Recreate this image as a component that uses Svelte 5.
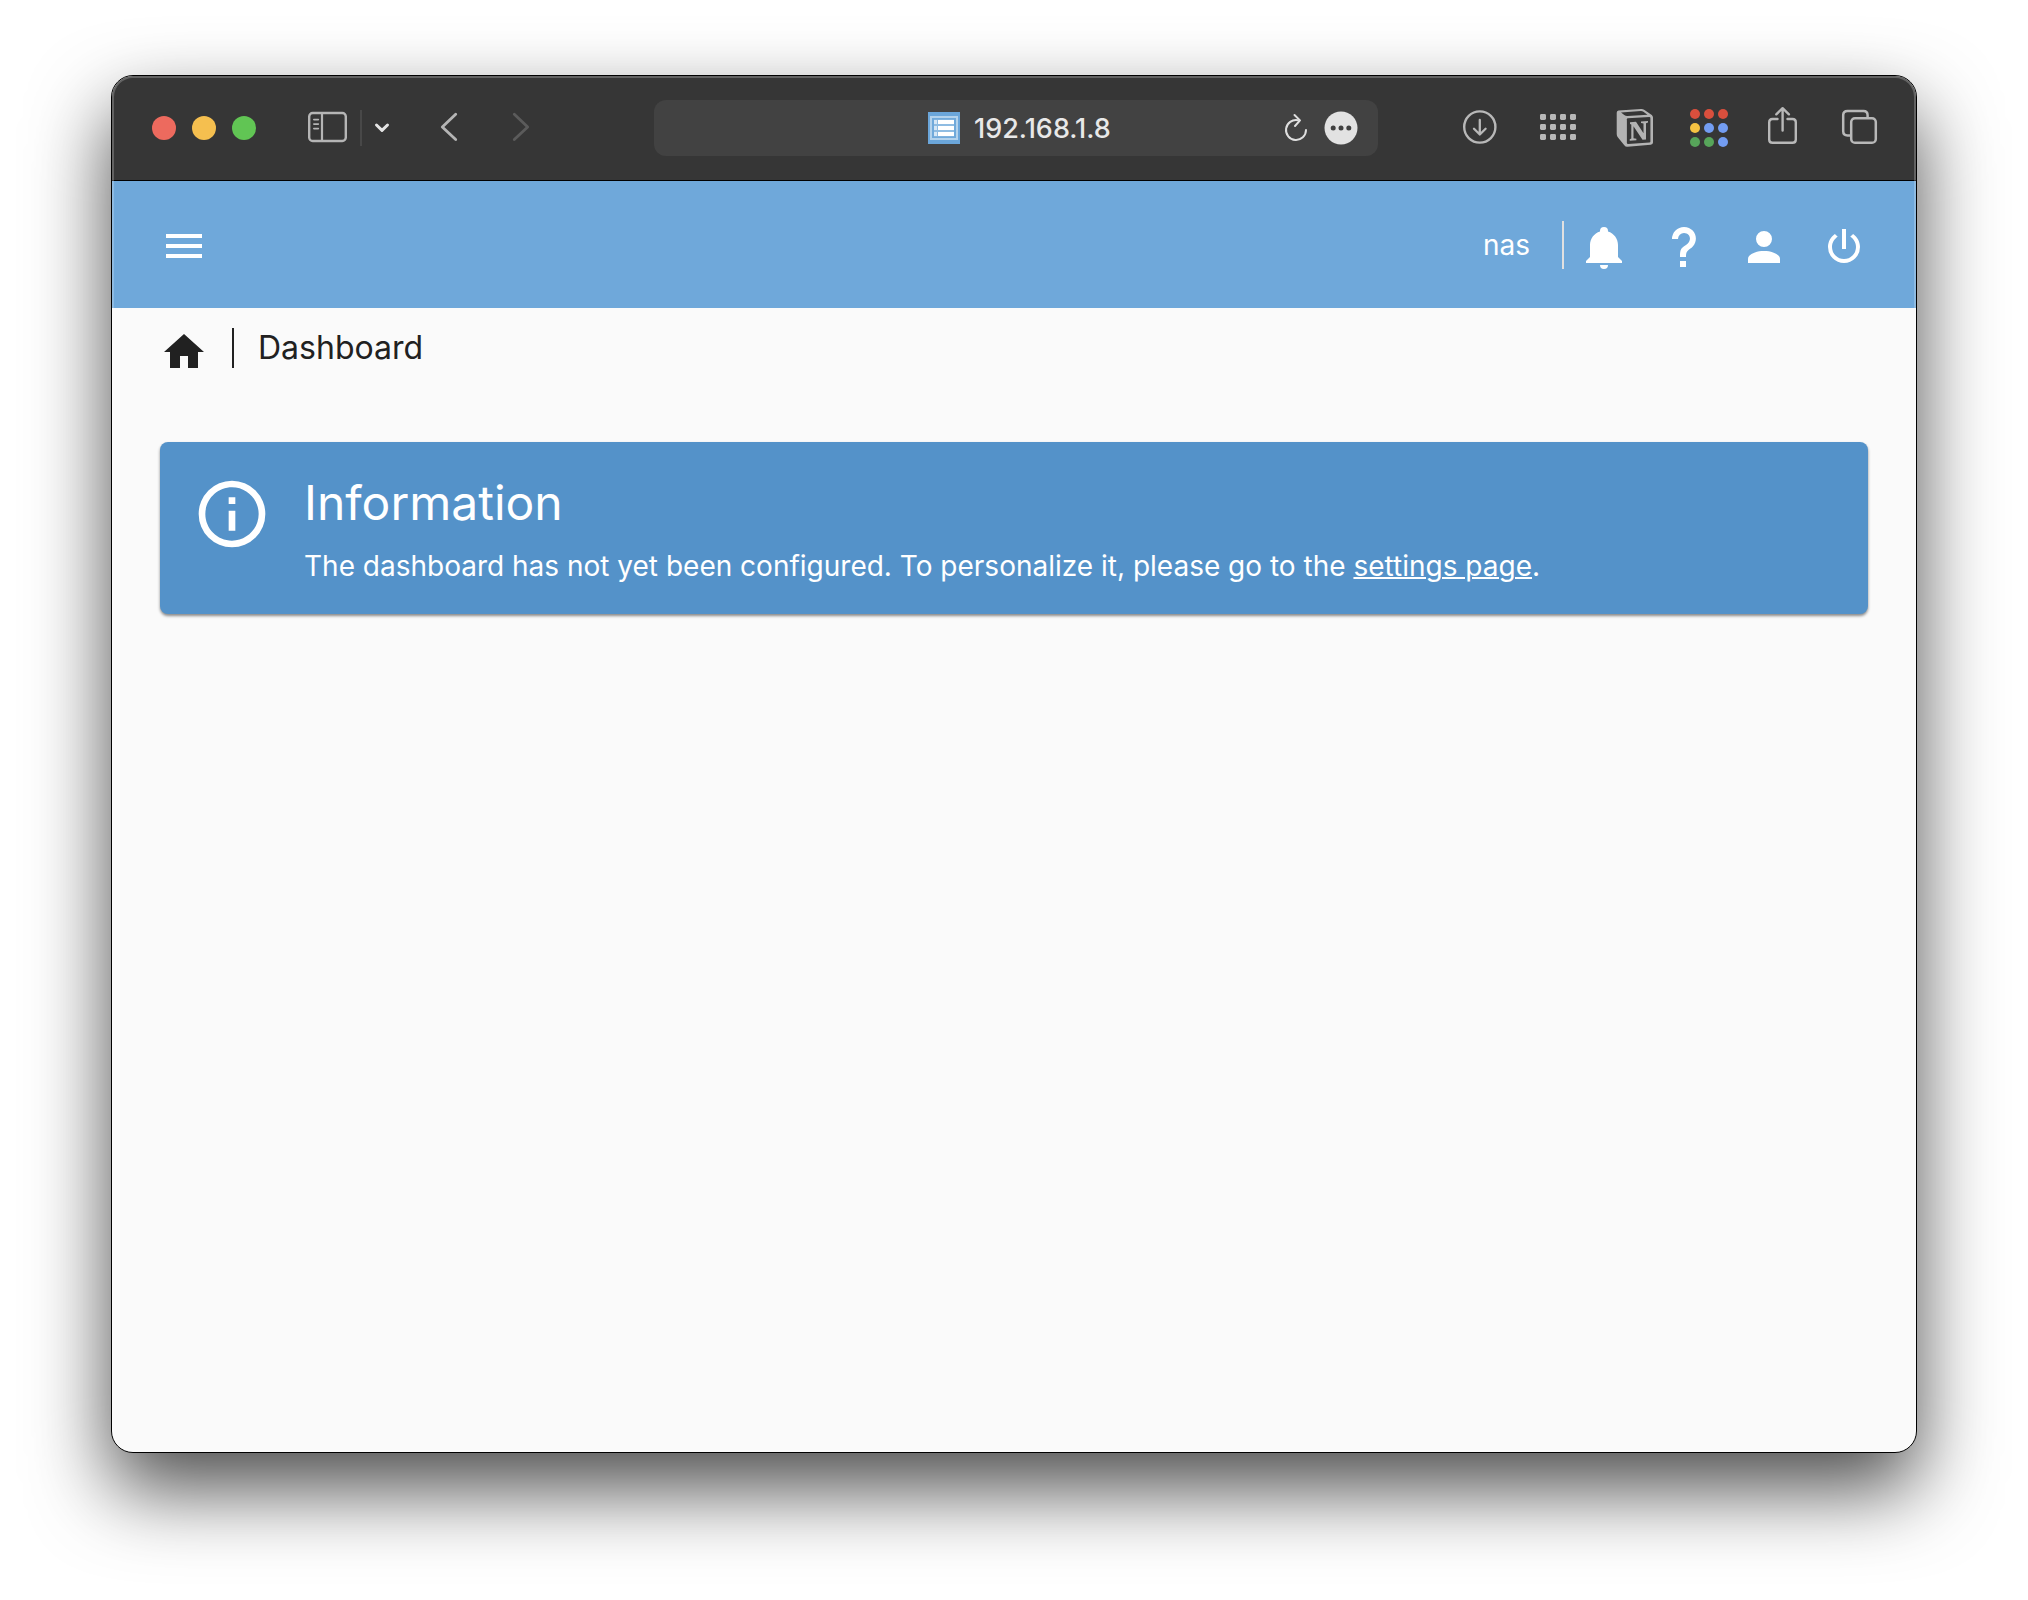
<script>
  let address = $state('192.168.1.8');

  const dots = [
    ['#d94f3d', '#d94f3d', '#d94f3d'],
    ['#f5c242', '#739df2', '#739df2'],
    ['#57a55a', '#57a55a', '#739df2']
  ];

  const actions = [
    {
      label: 'Notifications',
      path: 'M21,19V20H3V19L5,17V11C5,7.9 7.03,5.17 10,4.29C10,4.19 10,4.1 10,4A2,2 0 0,1 12,2A2,2 0 0,1 14,4C14,4.1 14,4.19 14,4.29C16.97,5.17 19,7.9 19,11V17L21,19M14,21A2,2 0 0,1 12,23A2,2 0 0,1 10,21'
    },
    {
      label: 'Help',
      path: 'M10,19H13V22H10V19M12,2C17.35,2.22 19.68,7.62 16.5,11.67C15.67,12.67 14.33,13.33 13.67,14.17C13,15 13,16 13,17H10C10,15.33 10,13.92 10.67,12.92C11.33,11.92 12.67,11.33 13.5,10.67C15.92,8.43 15.32,5.26 12,5A3,3 0 0,0 9,8H6A6,6 0 0,1 12,2Z'
    },
    {
      label: 'User settings',
      path: 'M12,4A4,4 0 0,1 16,8A4,4 0 0,1 12,12A4,4 0 0,1 8,8A4,4 0 0,1 12,4M12,14C16.42,14 20,15.79 20,18V20H4V18C4,15.79 7.58,14 12,14Z'
    },
    {
      label: 'Power',
      path: 'M16.56,5.44L15.11,6.89C16.84,7.94 18,9.83 18,12A6,6 0 0,1 12,18A6,6 0 0,1 6,12C6,9.83 7.16,7.94 8.88,6.88L7.44,5.44C5.36,6.88 4,9.28 4,12A8,8 0 0,0 12,20A8,8 0 0,0 20,12C20,9.28 18.64,6.88 16.56,5.44M13,3H11V13H13'
    }
  ];
</script>

<div class="desktop">
  <div class="window">
    <div class="toolbar">
      <div class="side left">
        <div class="lights">
          <button class="light close" aria-label="Close"></button>
          <button class="light minimize" aria-label="Minimize"></button>
          <button class="light zoom" aria-label="Zoom"></button>
        </div>
        <div class="tabs-menu">
          <button aria-label="Show sidebar">
            <svg width="40" height="40" viewBox="0 0 40 40" fill="none" stroke="#b5b5b5" stroke-linecap="round">
              <rect x="1.2" y="5" width="36.6" height="28" rx="3.5" stroke-width="2.4" />
              <path d="M14 5V33" stroke-width="2.2" />
              <path d="M5.8 11.6H10.4M5.8 16.1H10.4M5.8 20.6H10.4" stroke-width="1.6" />
            </svg>
          </button>
          <span class="rule"></span>
          <button aria-label="Tab groups">
            <svg width="16" height="40" viewBox="0 0 16 40" fill="none" stroke="#e4e4e4" stroke-width="3" stroke-linecap="round" stroke-linejoin="round">
              <path d="M2.5 17L8 22.3L13.5 17" />
            </svg>
          </button>
        </div>
        <div class="history">
          <button aria-label="Back">
            <svg width="20" height="40" viewBox="0 0 20 40" fill="none" stroke="#b5b5b5" stroke-width="2.8" stroke-linecap="round" stroke-linejoin="round">
              <path d="M17.7 6.2L4.3 19L17.7 31.6" />
            </svg>
          </button>
          <button aria-label="Forward" disabled>
            <svg width="20" height="40" viewBox="0 0 20 40" fill="none" stroke="#5b5b5b" stroke-width="2.8" stroke-linecap="round" stroke-linejoin="round">
              <path d="M4.3 6.2L17.7 19L4.3 31.6" />
            </svg>
          </button>
        </div>
      </div>

      <div class="address">
        <label class="site">
          <svg width="32" height="32" viewBox="0 0 32 32" aria-hidden="true">
            <rect width="32" height="32" fill="#6ba6da" />
            <rect x="2" y="4" width="28" height="24" fill="#b3d2ec" />
            <rect x="4" y="6" width="24" height="20" fill="#70a9da" />
            <rect x="6" y="7.5" width="20" height="17" fill="#8fbce2" />
            <path d="M10 8H26V12H10ZM10 14H26V18H10ZM10 20H26V24H10Z" fill="#fff" />
            <path d="M6 8H9V12H6ZM6 14H9V18H6ZM6 20H9V24H6Z" fill="#d5e6f5" />
          </svg>
          <input type="text" aria-label="Address" bind:value={address} />
        </label>
        <div class="page-actions">
          <button aria-label="Reload">
            <svg width="24" height="34" viewBox="0 0 24 34" fill="none" stroke="#dedede" stroke-width="2" stroke-linecap="round" stroke-linejoin="round">
              <path d="M14 9.2A10 10 0 1 0 22 19" />
              <path d="M10.5 4L16 9.4L11 15" />
            </svg>
          </button>
          <button aria-label="Page menu">
            <svg width="34" height="34" viewBox="0 0 34 34">
              <circle cx="17" cy="17" r="16.5" fill="#e2e2e2" />
              <g fill="#404040">
                <circle cx="9.2" cy="17" r="2.5" />
                <circle cx="17" cy="17" r="2.5" />
                <circle cx="24.8" cy="17" r="2.5" />
              </g>
            </svg>
          </button>
        </div>
      </div>

      <div class="side right">
        <button aria-label="Downloads">
          <svg width="40" height="40" viewBox="0 0 40 40" fill="none" stroke="#b8b8b8" stroke-linecap="round" stroke-linejoin="round">
            <circle cx="19.8" cy="19" r="15.6" stroke-width="2.4" />
            <path d="M19.8 12V26.5M14 20.8L19.8 26.5L25.6 20.8" stroke-width="2.3" />
          </svg>
        </button>
        <button aria-label="Top sites">
          <svg width="40" height="40" viewBox="0 0 40 40" fill="#b8b8b8">
            {#each [6, 16, 26] as y}
              {#each [4, 14, 24, 34] as x}
                <rect {x} {y} width="6" height="6" rx="1.4" />
              {/each}
            {/each}
          </svg>
        </button>
        <button aria-label="Notion clipper">
          <svg width="40" height="40" viewBox="0 0 40 40">
            <path d="M6.5 2.6L29 1Q31 .9 32.5 2L39.8 7Q41 8 41 9.5V34.5Q41 36.6 38.8 36.8L15.5 38.8Q13.5 39 12.3 37.3L6 29.5Q4.7 28 4.7 26V4.8Q4.7 2.8 6.5 2.6Z" fill="#b3b3b3" />
            <path d="M9 4.4L29 3Q30.2 3 31 3.5L35.5 6.7L15.5 8Q13.6 8.1 12.3 7Z" fill="#363636" />
            <path d="M14.9 11.3Q14.9 10.4 15.8 10.3L37.3 9Q38.4 9 38.4 10V33.5Q38.4 34.5 37.4 34.6L16 36Q14.9 36 14.9 35Z" fill="#363636" />
            <path d="M18 14.2L24 13.8L31.5 25.2V15.5L29 15.1V13.5L36 13V14.6L34 15.3V31.4L30.5 31.8L21.5 18.2V30.2L24.4 30.8V32.3L17.7 32.7V31.2L19.3 30.5V16.5L18 16Z" fill="#b3b3b3" />
          </svg>
        </button>
        <button aria-label="Google apps">
          <svg width="40" height="40" viewBox="0 0 40 40">
            {#each dots as row, r}
              {#each row as fill, c}
                <circle cx={7 + 14 * c} cy={6 + 14 * r} r="5" {fill} />
              {/each}
            {/each}
          </svg>
        </button>
        <button aria-label="Share">
          <svg width="40" height="40" viewBox="0 0 40 40" fill="none" stroke="#b8b8b8" stroke-width="2.4" stroke-linecap="round" stroke-linejoin="round">
            <path d="M13.5 11H8.5Q5.2 11 5.2 14.3V31.5Q5.2 34.8 8.5 34.8H28.5Q31.8 34.8 31.8 31.5V14.3Q31.8 11 28.5 11H23.5" />
            <path d="M18.6 22.5V.5M12.3 6.3L18.6 .2L24.9 6.3" />
          </svg>
        </button>
        <button aria-label="Tab overview">
          <svg width="40" height="40" viewBox="0 0 40 40" fill="none" stroke="#b8b8b8" stroke-width="2.5">
            <rect x="11.2" y="10.2" width="24.6" height="24.6" rx="3.8" />
            <path d="M11 27.5H7.5Q3.2 27.5 3.2 23.3V7.3Q3.2 3 7.5 3H23.5Q27.6 3 27.6 7.3V10" />
          </svg>
        </button>
      </div>
    </div>

    <header>
      <button aria-label="Menu">
        <svg width="48" height="48" viewBox="0 0 24 24" fill="#fff"><path d="M3,6H21V8H3V6M3,11H21V13H3V11M3,16H21V18H3V16Z" /></svg>
      </button>
      <div class="account">
        <span class="host">nas</span>
        <div class="actions">
          {#each actions as action}
            <button aria-label={action.label}>
              <svg width="48" height="48" viewBox="0 0 24 24" fill="#fff"><path d={action.path} /></svg>
            </button>
          {/each}
        </div>
      </div>
    </header>

    <nav aria-label="Breadcrumb">
      <a href="#/" aria-label="Home">
        <svg width="48" height="48" viewBox="0 0 24 24" fill="#212121"><path d="M10,20V14H14V20H19V12H22L12,3L2,12H5V20H10Z" /></svg>
      </a>
      <span class="crumb">Dashboard</span>
    </nav>

    <main>
      <section class="notice">
        <svg width="80" height="80" viewBox="0 0 24 24" fill="#fff" aria-hidden="true"><path d="M11,9H13V7H11M12,20C7.59,20 4,16.41 4,12C4,7.59 7.59,4 12,4C16.41,4 20,7.59 20,12C20,16.41 16.41,20 12,20M12,2A10,10 0 0,0 2,12A10,10 0 0,0 12,22A10,10 0 0,0 22,12A10,10 0 0,0 12,2M11,17H13V11H11V17Z" /></svg>
        <div>
          <h1>Information</h1>
          <p>The dashboard has not yet been configured. To personalize it, please go to the <a href="#/usermgmt/settings">settings page</a>.</p>
        </div>
      </section>
    </main>
  </div>
</div>

<style>
  :global(body) {
    margin: 0;
    background: #fff;
  }

  .desktop {
    box-sizing: border-box;
    min-height: 100vh;
    padding: 75px 111px 147px;
    display: flex;
    overflow: hidden;
    font-family: Inter, 'Liberation Sans', sans-serif;
  }

  .window {
    position: relative;
    flex: 1;
    min-width: 0;
    display: flex;
    flex-direction: column;
    overflow: hidden;
    border: 1px solid #000;
    border-radius: 22px;
    background: #fafafa;
    box-shadow: 0 36px 80px rgba(0, 0, 0, 0.7);
  }

  /* light rim along the inner edge of the window */
  .window::after {
    content: '';
    position: absolute;
    inset: 0;
    border-radius: 21px;
    box-shadow: inset 0 0 0 2px rgba(255, 255, 255, 0.22);
    pointer-events: none;
  }

  button {
    display: block;
    margin: 0;
    padding: 0;
    border: 0;
    background: none;
    cursor: pointer;
  }

  svg {
    display: block;
    flex: none;
    overflow: visible;
  }

  .toolbar {
    height: 104px;
    display: flex;
    align-items: center;
    background: #363636;
    border-bottom: 1px solid #000;
  }

  .side {
    flex: 1;
    box-sizing: border-box;
    display: flex;
    align-items: center;
  }

  .left {
    padding-left: 40px;
    gap: 48px;
  }

  .right {
    padding-right: 36px;
    gap: 36px;
    justify-content: flex-end;
  }

  .lights {
    display: flex;
    gap: 16px;
  }

  .light {
    width: 24px;
    height: 24px;
    border-radius: 50%;
  }

  .close {
    background: #ed6a5e;
  }

  .minimize {
    background: #f5bf4f;
  }

  .zoom {
    background: #61c554;
  }

  .tabs-menu {
    padding-left: 4px;
    display: flex;
    align-items: center;
    gap: 12px;
  }

  .rule {
    width: 2px;
    height: 36px;
    background: #484848;
  }

  .history {
    display: flex;
    gap: 52px;
  }

  .address {
    flex: 0 1 724px;
    box-sizing: border-box;
    height: 56px;
    padding: 0 20px;
    display: grid;
    grid-template-columns: 1fr auto 1fr;
    align-items: center;
    border-radius: 12px;
    background: #424242;
  }

  .site {
    grid-column: 2;
    padding-left: 8px;
    display: flex;
    align-items: center;
    gap: 14px;
  }

  .site input {
    width: 138px;
    height: 32px;
    padding: 2px 0 0;
    border: 0;
    outline: 0;
    background: none;
    color: #e8e8e8;
    font: 500 27px/32px Inter, 'Liberation Sans', sans-serif;
  }

  .page-actions {
    grid-column: 3;
    justify-self: end;
    display: flex;
    gap: 16px;
  }

  header {
    box-sizing: border-box;
    height: 127px;
    padding: 3px 48px 0;
    display: flex;
    align-items: center;
    justify-content: space-between;
    background: #6fa8da;
  }

  .account {
    display: flex;
    align-items: flex-end;
    gap: 16px;
  }

  .host {
    margin-bottom: 2px;
    padding-right: 32px;
    border-right: 2px solid #e0e0e0;
    color: #fff;
    font-size: 28px;
    line-height: 48px;
  }

  .actions {
    display: flex;
    gap: 32px;
    margin-top: 2px;
  }

  nav {
    padding: 20px 48px;
    display: flex;
    align-items: flex-start;
    gap: 24px;
  }

  .crumb {
    padding-left: 24px;
    border-left: 2px solid #212121;
    color: #212121;
    font-size: 32px;
    line-height: 40px;
  }

  main {
    padding: 46px 48px;
  }

  .notice {
    padding: 32px;
    display: flex;
    align-items: flex-start;
    gap: 32px;
    border-radius: 8px;
    background: #5492c9;
    color: #fff;
    box-shadow: 0 2px 3px rgba(0, 0, 0, 0.45);
  }

  h1 {
    margin: 0 0 18px;
    font-size: 48px;
    font-weight: 400;
    line-height: 58px;
  }

  p {
    margin: 0;
    font-size: 28px;
    line-height: 32px;
  }

  p a {
    color: inherit;
    text-decoration: underline;
    text-decoration-thickness: 2px;
  }
</style>
